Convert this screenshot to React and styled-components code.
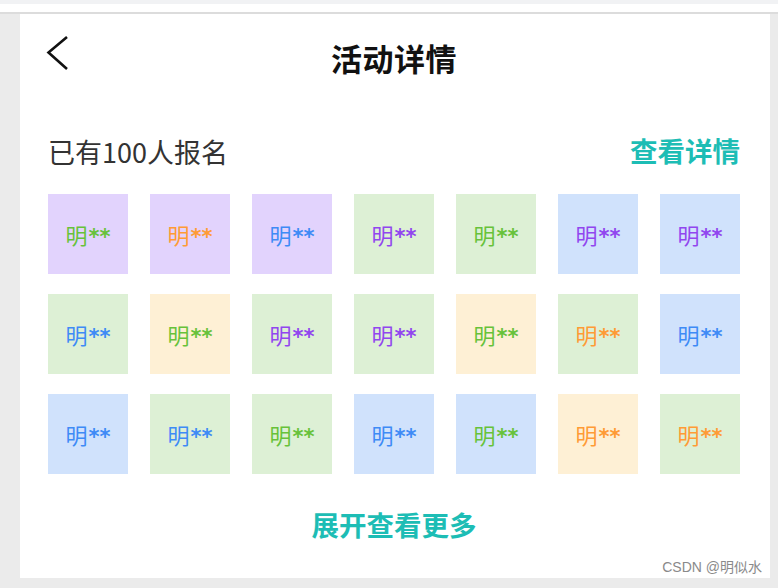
import React from "react";
import styled, { createGlobalStyle } from "styled-components";

const GlobalStyle = createGlobalStyle`
  html, body {
    margin: 0;
    padding: 0;
    background: #ebebeb;
    font-family: "Noto Sans CJK SC", "Noto Sans", sans-serif;
  }
`;

const COLORS = {
  purple: { bg: "#e2d3fd", fg: "#9146ef" },
  green: { bg: "#ddf0d5", fg: "#67c23a" },
  blue: { bg: "#d0e2fc", fg: "#3e8bf6" },
  cream: { bg: "#fef0d5", fg: "#ff9b35" },
};

const rows = [
  [["purple", "green"], ["purple", "cream"], ["purple", "blue"], ["green", "purple"], ["green", "green"], ["blue", "purple"], ["blue", "purple"]],
  [["green", "blue"], ["cream", "green"], ["green", "purple"], ["green", "purple"], ["cream", "green"], ["green", "cream"], ["blue", "blue"]],
  [["blue", "blue"], ["green", "blue"], ["green", "green"], ["blue", "blue"], ["blue", "green"], ["cream", "cream"], ["green", "cream"]],
];

const App = () => {
  return (
    <>
      <GlobalStyle />
      <Page>
        <TopStrip />
        <Body>
          <Panel>
            <Header>
              <BackButton>
                <svg width="24" height="36" viewBox="0 0 24 36">
                  <polyline
                    points="21,2 2.5,17.5 21,34"
                    fill="none"
                    stroke="#111"
                    strokeWidth="2.6"
                  />
                </svg>
              </BackButton>
              <Title>活动详情</Title>
              <span />
            </Header>
            <InfoRow>
              <Count>已有100人报名</Count>
              <TealLink>查看详情</TealLink>
            </InfoRow>
            <Grid>
              {rows.flat().map(([bg, fg], i) => (
                <Cell key={i} $bg={COLORS[bg].bg} $fg={COLORS[fg].fg}>
                  明<Stars>**</Stars>
                </Cell>
              ))}
            </Grid>
            <More>展开查看更多</More>
            <Watermark>CSDN @明似水</Watermark>
          </Panel>
          <SideGap />
        </Body>
      </Page>
    </>
  );
};
export default App;

const Page = styled.div`
  width: 778px;
  height: 588px;
  display: flex;
  flex-direction: column;
  overflow: hidden;
`;

const TopStrip = styled.div`
  height: 4px;
  background: #f1f2f4;
  border-bottom: 8px solid #ffffff;
  box-shadow: 0 2px 0 #dcdcdc;
  margin-bottom: 2px;
`;

const Body = styled.div`
  flex: 1;
  display: flex;
  padding: 0 0 10px 20px;
`;

const Panel = styled.div`
  flex: 1;
  background: #ffffff;
  display: flex;
  flex-direction: column;
  padding: 0 30px 0 28px;
  position: relative;
`;

const SideGap = styled.div`
  width: 8px;
`;

const Header = styled.div`
  height: 86px;
  display: grid;
  grid-template-columns: 1fr auto 1fr;
  align-items: center;
`;

const BackButton = styled.div`
  display: flex;
  align-items: center;
  margin-top: -9px;
  margin-left: -2px;
`;

const Title = styled.div`
  font-size: 31px;
  font-weight: 700;
  color: #111;
  letter-spacing: 0.5px;
`;

const InfoRow = styled.div`
  margin-top: 32px;
  height: 40px;
  display: flex;
  justify-content: space-between;
  align-items: center;
`;

const Count = styled.div`
  font-size: 27px;
  color: #333;
  margin-top: -2px;
`;

const TealLink = styled.div`
  font-size: 27.5px;
  font-weight: 700;
  color: #1dbdb5;
  margin-top: -4px;
`;

const Grid = styled.div`
  margin-top: 22px;
  display: grid;
  grid-template-columns: repeat(7, 80px);
  column-gap: 22px;
  row-gap: 20px;
`;

const Cell = styled.div`
  height: 80px;
  display: flex;
  align-items: center;
  justify-content: center;
  background: ${(p) => p.$bg};
  color: ${(p) => p.$fg};
  font-family: "Noto Sans CJK SC", sans-serif;
  font-size: 22px;
`;

const Stars = styled.span`
  display: inline-block;
  font-family: "DejaVu Sans", sans-serif;
  font-weight: 700;
  font-size: 21px;
  margin-left: 1px;
  transform: translateY(3px);
`;

const More = styled.div`
  margin-top: 30px;
  text-align: center;
  font-size: 27.5px;
  font-weight: 700;
  color: #1dbdb5;
`;

const Watermark = styled.div`
  position: absolute;
  right: 8px;
  bottom: 2px;
  font-family: "Liberation Sans", "Noto Sans CJK SC", sans-serif;
  font-size: 14px;
  color: #8a8a8a;
`;
